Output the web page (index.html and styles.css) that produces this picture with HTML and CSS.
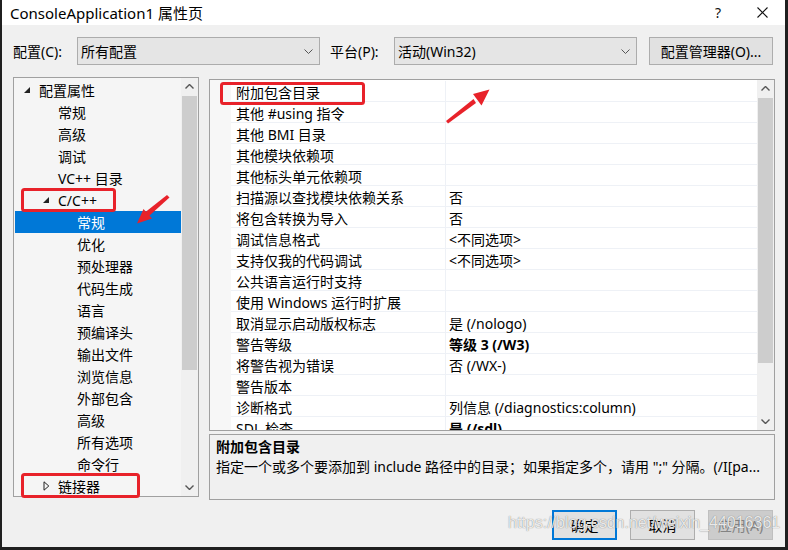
FILE: index.html
```html
<!DOCTYPE html>
<html lang="zh-CN">
<head>
    <meta charset="UTF-8">
    <title>ConsoleApplication1 属性页</title>
    <link rel="stylesheet" href="styles.css">
</head>
<body>

<div class="window">
    <!-- タイトルバー -->
    <div class="titlebar">
        <span class="title">ConsoleApplication1 属性页</span>
        <span class="help">?</span>
        <svg class="close" width="11" height="11" viewBox="0 0 11 11"><path d="M0.5 0.5 L10.5 10.5 M10.5 0.5 L0.5 10.5" stroke="#111" stroke-width="1.1" fill="none"/></svg>
    </div>

    <!-- 構成 / プラットフォーム -->
    <div class="toolbar">
        <span class="tb-label">配置(C):</span>
        <div class="combo">
            <span>所有配置</span>
            <svg class="chev" width="9" height="5" viewBox="0 0 9 5"><path d="M0.5 0.5 L4.5 4.5 L8.5 0.5" stroke="#555" fill="none"/></svg>
        </div>
        <span class="tb-label tb-label-2">平台(P):</span>
        <div class="combo">
            <span>活动(Win32)</span>
            <svg class="chev" width="9" height="5" viewBox="0 0 9 5"><path d="M0.5 0.5 L4.5 4.5 L8.5 0.5" stroke="#555" fill="none"/></svg>
        </div>
        <button class="btn btn-manager">配置管理器(O)...</button>
    </div>

    <div class="main">
        <!-- 左：ツリー -->
        <div class="tree">
            <ul class="tree-list">
                <li class="lv1"><svg class="twisty" width="7" height="7" viewBox="0 0 7 7"><path d="M6 0 L6 6 L0 6 Z" fill="#222"/></svg>配置属性</li>
                <li class="lv2">常规</li>
                <li class="lv2">高级</li>
                <li class="lv2">调试</li>
                <li class="lv2">VC++ 目录</li>
                <li class="lv2"><svg class="twisty" width="7" height="7" viewBox="0 0 7 7"><path d="M6 0 L6 6 L0 6 Z" fill="#222"/></svg>C/C++</li>
                <li class="lv3 selected">常规</li>
                <li class="lv3">优化</li>
                <li class="lv3">预处理器</li>
                <li class="lv3">代码生成</li>
                <li class="lv3">语言</li>
                <li class="lv3">预编译头</li>
                <li class="lv3">输出文件</li>
                <li class="lv3">浏览信息</li>
                <li class="lv3">外部包含</li>
                <li class="lv3">高级</li>
                <li class="lv3">所有选项</li>
                <li class="lv3">命令行</li>
                <li class="lv2"><svg class="twisty" width="7" height="10" viewBox="0 0 7 10"><path d="M1 0.8 L5.8 5 L1 9.2 Z" fill="none" stroke="#222"/></svg>链接器</li>
            </ul>
            <div class="scrollbar">
                <div class="sb-arrow"><svg width="9" height="5" viewBox="0 0 9 5"><path d="M0.5 4.5 L4.5 0.5 L8.5 4.5" stroke="#555" stroke-width="1.4" fill="none"/></svg></div>
                <div class="sb-track"><div class="sb-thumb tree-thumb"></div></div>
                <div class="sb-arrow"><svg width="9" height="5" viewBox="0 0 9 5"><path d="M0.5 0.5 L4.5 4.5 L8.5 0.5" stroke="#555" stroke-width="1.4" fill="none"/></svg></div>
            </div>
        </div>

        <!-- 右：プロパティグリッドと説明 -->
        <div class="right">
            <div class="grid">
                <div class="grid-rows">
                    <div class="row"><span class="name">附加包含目录</span><span class="value"></span></div>
                    <div class="row"><span class="name">其他 #using 指令</span><span class="value"></span></div>
                    <div class="row"><span class="name">其他 BMI 目录</span><span class="value"></span></div>
                    <div class="row"><span class="name">其他模块依赖项</span><span class="value"></span></div>
                    <div class="row"><span class="name">其他标头单元依赖项</span><span class="value"></span></div>
                    <div class="row"><span class="name">扫描源以查找模块依赖关系</span><span class="value">否</span></div>
                    <div class="row"><span class="name">将包含转换为导入</span><span class="value">否</span></div>
                    <div class="row"><span class="name">调试信息格式</span><span class="value">&lt;不同选项&gt;</span></div>
                    <div class="row"><span class="name">支持仅我的代码调试</span><span class="value">&lt;不同选项&gt;</span></div>
                    <div class="row"><span class="name">公共语言运行时支持</span><span class="value"></span></div>
                    <div class="row"><span class="name">使用 Windows 运行时扩展</span><span class="value"></span></div>
                    <div class="row"><span class="name">取消显示启动版权标志</span><span class="value">是 (/nologo)</span></div>
                    <div class="row"><span class="name">警告等级</span><span class="value bold">等级 3 (/W3)</span></div>
                    <div class="row"><span class="name">将警告视为错误</span><span class="value">否 (/WX-)</span></div>
                    <div class="row"><span class="name">警告版本</span><span class="value"></span></div>
                    <div class="row"><span class="name">诊断格式</span><span class="value">列信息 (/diagnostics:column)</span></div>
                    <div class="row"><span class="name">SDL 检查</span><span class="value bold">是 (/sdl)</span></div>
                </div>
                <div class="scrollbar">
                    <div class="sb-arrow"><svg width="9" height="5" viewBox="0 0 9 5"><path d="M0.5 4.5 L4.5 0.5 L8.5 4.5" stroke="#555" stroke-width="1.4" fill="none"/></svg></div>
                    <div class="sb-track"><div class="sb-thumb grid-thumb"></div></div>
                    <div class="sb-arrow"><svg width="9" height="5" viewBox="0 0 9 5"><path d="M0.5 0.5 L4.5 4.5 L8.5 0.5" stroke="#555" stroke-width="1.4" fill="none"/></svg></div>
                </div>
            </div>
            <div class="desc">
                <div class="desc-title">附加包含目录</div>
                <div class="desc-text">指定一个或多个要添加到 include 路径中的目录；如果指定多个，请用 ";" 分隔。(/I[pa...</div>
            </div>
        </div>
    </div>

    <div class="buttons">
        <button class="btn btn-default">确定</button>
        <button class="btn">取消</button>
        <button class="btn btn-disabled">应用(A)</button>
    </div>
</div>

<!-- 注釈（赤枠・矢印）と透かし -->
<svg class="marks" width="788" height="550" viewBox="0 0 788 550">
    <g fill="none" stroke="#e8222a" stroke-width="3">
        <rect x="22.5" y="189.5" width="92" height="21" rx="2"/>
        <rect x="22.5" y="474.5" width="116" height="22" rx="2"/>
        <rect x="221.5" y="83.5" width="142" height="20" rx="2"/>
    </g>
    <g fill="#e8222a">
        <path d="M167 195 L169.5 197.5 L149 216 L145.5 212 Z"/>
        <path d="M137 223.5 L143.5 209 L152 218.5 Z"/>
        <path d="M446 121 L448 123.5 L476 103 L473.5 99 Z"/>
        <path d="M489.5 89.5 L473 94 L481.5 105.5 Z"/>
    </g>
</svg>
<div class="watermark">https://blog.csdn.net/weixin_44016361</div>

</body>
</html>
```

FILE: styles.css
```css
/* --- base --- */
:root {
    --window-bg: #f0f0f0;
    --border-color: #a0a0a0;
    --grid-line: #eef1f6;
    --select-color: #0078d7;
    --mark-red: #e8222a;
}

body {
    margin: 0;
    width: 788px;
    height: 550px;
    position: relative;
    overflow: hidden;
    background-color: #1f1f1f;
    font-family: "Noto Sans", "Noto Sans CJK SC", sans-serif;
    font-size: 14px;
    color: #000;
}

ul {
    margin: 0;
    padding: 0;
    list-style: none;
}

/* --- dialog window --- */
.window {
    margin-left: 2px;
    width: 783px;
    height: 547px;
    background-color: var(--window-bg);
    display: flex;
    flex-direction: column;
}

.titlebar {
    height: 25px;
    background-color: #fff;
    display: flex;
    align-items: center;
    padding-left: 8px;
    flex-shrink: 0;
}
.title {
    font-size: 15px;
    flex: 1;
}
.help {
    font-size: 14px;
    margin-right: 36px;
    color: #111;
}
.close {
    margin-right: 17px;
}

/* --- toolbar --- */
.toolbar {
    display: flex;
    align-items: center;
    padding: 12px 0 0 11px;
    height: 28px;
}
.tb-label {
    width: 64px;
}
.tb-label-2 {
    margin-left: 10px;
}
.combo {
    width: 243px;
    height: 28px;
    box-sizing: border-box;
    border: 1px solid #acacac;
    background-color: #e5e5e5;
    display: flex;
    align-items: center;
    justify-content: space-between;
    padding: 0 6px 0 3px;
}
.btn {
    font-family: inherit;
    font-size: 14px;
    color: #000;
    background-color: #e1e1e1;
    border: 1px solid #adadad;
    padding: 0;
    height: 30px;
    width: 65px;
}
.btn-manager {
    margin-left: 12px;
    width: 124px;
    height: 28px;
}

/* --- main area --- */
.main {
    display: flex;
    padding: 12px 0 0 11px;
    gap: 10px;
}

.tree {
    width: 186px;
    height: 420px;
    box-sizing: border-box;
    border: 1px solid var(--border-color);
    background-color: #f5f5f5;
    display: flex;
}
.tree-list {
    width: 166px;
    padding: 1px 0 0 1px;
    overflow: hidden;
}
.tree-list li {
    height: 22px;
    line-height: 24px;
    white-space: nowrap;
}
.tree-list .lv1 { padding-left: 24px; }
.tree-list .lv2 { padding-left: 43px; }
.tree-list .lv3 { padding-left: 62px; }
.tree-list .selected {
    background-color: var(--select-color);
    color: #fff;
}
.twisty {
    margin-left: -15px;
    margin-right: 8px;
    vertical-align: middle;
    position: relative;
    top: -2px;
}

/* scrollbars */
.scrollbar {
    width: 17px;
    flex-shrink: 0;
    background-color: #f0f0f0;
    display: flex;
    flex-direction: column;
}
.sb-arrow {
    height: 17px;
    display: flex;
    align-items: center;
    justify-content: center;
    flex-shrink: 0;
}
.sb-track {
    flex: 1;
    padding: 1px 1px 0 1px;
}
.sb-thumb {
    background-color: #cdcdcd;
}
.tree-thumb { height: 274px; }
.grid-thumb { height: 265px; }

.right {
    width: 566px;
    display: flex;
    flex-direction: column;
}

/* --- property grid --- */
.grid {
    margin-top: 2px;
    height: 352px;
    box-sizing: border-box;
    border: 1px solid var(--border-color);
    background-color: #fff;
    display: flex;
}
.grid-rows {
    flex: 1;
    padding-top: 1px;
    overflow: hidden;
    background: linear-gradient(to right, #f7f7f7 21px, #fff 21px);
}
.row {
    height: 21px;
    box-sizing: border-box;
    display: flex;
    margin-left: 21px;
    border-bottom: 1px solid var(--grid-line);
    line-height: 23px;
    white-space: nowrap;
}
.row .name {
    width: 215px;
    padding-left: 5px;
    box-sizing: border-box;
    border-right: 1px solid var(--grid-line);
}
.row .value {
    padding-left: 3px;
}
.bold {
    font-weight: bold;
}

/* --- description --- */
.desc {
    margin-top: 3px;
    height: 66px;
    box-sizing: border-box;
    border: 1px solid var(--border-color);
    padding: 2px 6px;
    overflow: hidden;
}
.desc-title {
    font-weight: bold;
    line-height: 20px;
}
.desc-text {
    line-height: 20px;
    white-space: nowrap;
}

/* --- bottom buttons --- */
.buttons {
    display: flex;
    justify-content: flex-end;
    gap: 13px;
    padding: 10px 12px 0 0;
}
.btn-default {
    border: 2px solid var(--select-color);
}
.btn-disabled {
    background-color: #cccccc;
    border-color: #bfbfbf;
    color: #838383;
}

/* --- overlays --- */
.marks {
    position: absolute;
    left: 0;
    top: 0;
    pointer-events: none;
}
.watermark {
    position: absolute;
    left: 508px;
    top: 514px;
    font-family: "Liberation Sans", Arial, sans-serif;
    font-size: 16px;
    color: rgba(255, 255, 255, 0.85);
    text-shadow: 0 0 1px rgba(90, 90, 90, 0.9);
    pointer-events: none;
    white-space: nowrap;
}
```
